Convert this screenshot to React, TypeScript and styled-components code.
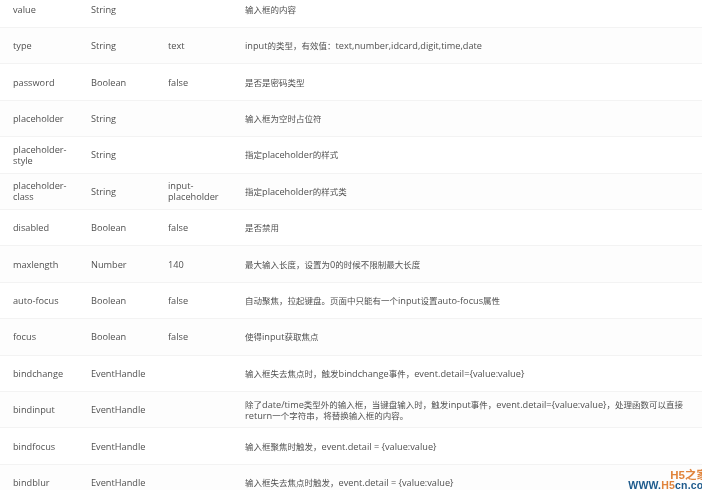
import styled, { createGlobalStyle } from 'styled-components';

const GlobalStyle = createGlobalStyle`
  html, body {
    margin: 0;
    padding: 0;
    background: #fff;
    overflow: hidden;
  }
`;

const Page = styled.div`
  position: relative;
  width: 702px;
  height: 490px;
  overflow: hidden;
  background: #fff;
  font-family: "Open Sans", "Noto Sans CJK SC", sans-serif;
  font-size: 9.2px;
  line-height: 11px;
  color: #505050;
`;

const Table = styled.div`
  margin-top: -8.5px;
  filter: blur(0.35px);
`;

const Row = styled.div<{ $tint?: boolean }>`
  display: grid;
  grid-template-columns: 78px 77px 77px 1fr;
  align-items: center;
  height: 36.42px;
  box-sizing: border-box;
  padding-left: 13px;
  padding-right: 11px;
  border-bottom: 1px solid #f3f3f3;
  background: ${(p) => (p.$tint ? '#fdfdfd' : '#fff')};
`;

const Cell = styled.div`
  padding-right: 6px;
`;

const Cjk = styled.span`
  font-size: 8.5px;
`;

const Watermark = styled.div`
  position: absolute;
  right: -6px;
  bottom: 0;
  text-align: right;
  font-family: "Liberation Sans", "Noto Sans CJK SC", sans-serif;
  font-weight: 700;
  white-space: nowrap;
  filter: blur(0.3px);
`;

const WatermarkTop = styled.div`
  font-size: 11.5px;
  line-height: 10px;
  color: #e0843c;
`;

const WatermarkBottom = styled.div`
  font-size: 10.5px;
  line-height: 10px;
  letter-spacing: 0.2px;
  margin-right: -5px;
  color: #1d5a8c;
`;

const Accent = styled.span`
  color: #e0843c;
`;

const rows = [
  ['value', 'String', '', '输入框的内容'],
  ['type', 'String', 'text', 'input的类型，有效值：text,number,idcard,digit,time,date'],
  ['password', 'Boolean', 'false', '是否是密码类型'],
  ['placeholder', 'String', '', '输入框为空时占位符'],
  ['placeholder-style', 'String', '', '指定placeholder的样式'],
  ['placeholder-class', 'String', 'input-placeholder', '指定placeholder的样式类'],
  ['disabled', 'Boolean', 'false', '是否禁用'],
  ['maxlength', 'Number', '140', '最大输入长度，设置为0的时候不限制最大长度'],
  ['auto-focus', 'Boolean', 'false', '自动聚焦，拉起键盘。页面中只能有一个input设置auto-focus属性'],
  ['focus', 'Boolean', 'false', '使得input获取焦点'],
  ['bindchange', 'EventHandle', '', '输入框失去焦点时，触发bindchange事件，event.detail={value:value}'],
  [
    'bindinput',
    'EventHandle',
    '',
    '除了date/time类型外的输入框，当键盘输入时，触发input事件，event.detail={value:value}，处理函数可以直接return一个字符串，将替换输入框的内容。',
  ],
  ['bindfocus', 'EventHandle', '', '输入框聚焦时触发，event.detail = {value:value}'],
  ['bindblur', 'EventHandle', '', '输入框失去焦点时触发，event.detail = {value:value}'],
];

// chinese runs sit a bit smaller than the latin text in this table
const splitRuns = (text: string) =>
  text.split(/([\u3000-\u9fff\uff00-\uffef]+)/).map((part, i) => (i % 2 === 1 ? <Cjk key={i}>{part}</Cjk> : part));

const App = () => (
  <Page>
    <GlobalStyle />
    <Table>
      {rows.map((row, i) => (
        <Row key={row[0]} $tint={i % 2 === 1}>
          {row.map((text, j) => (
            <Cell key={j}>{splitRuns(text)}</Cell>
          ))}
        </Row>
      ))}
    </Table>
    <Watermark>
      <WatermarkTop>H5之家</WatermarkTop>
      <WatermarkBottom>
        WWW.<Accent>H5</Accent>cn.com
      </WatermarkBottom>
    </Watermark>
  </Page>
);

export default App;
